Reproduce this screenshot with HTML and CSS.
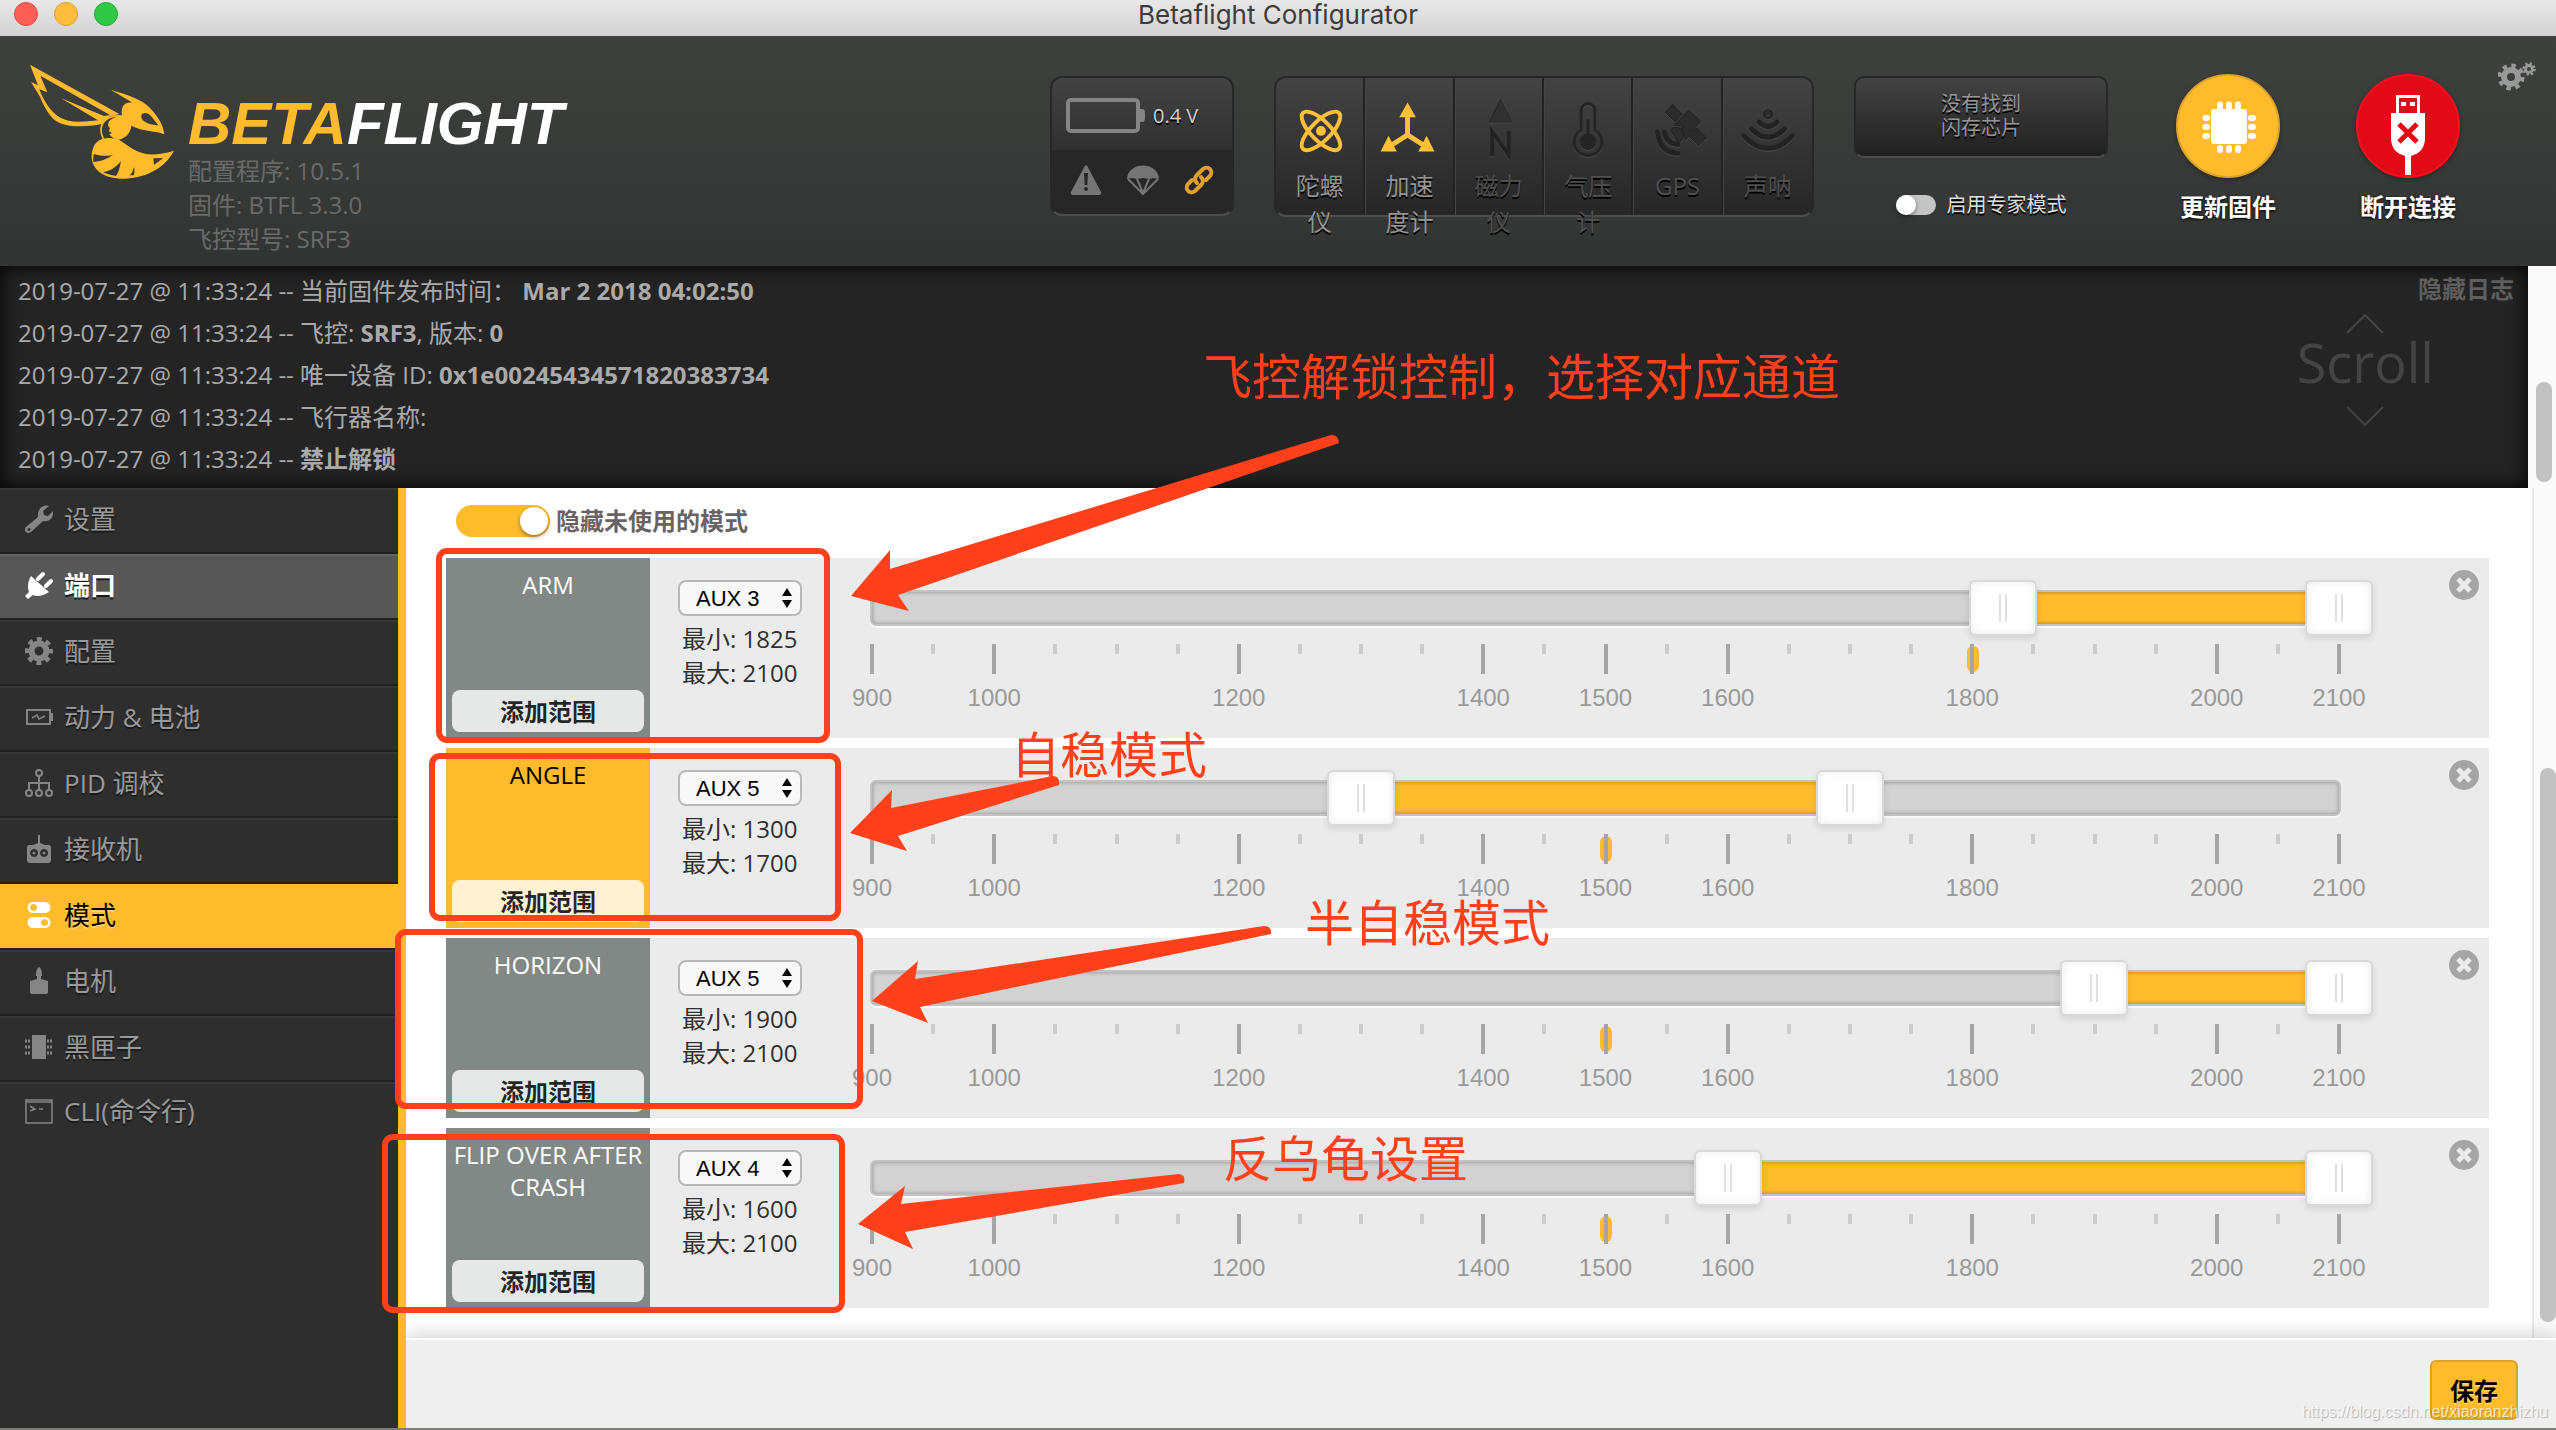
FILE: index.html
```html
<!DOCTYPE html>
<html lang="zh-CN">
<head>
<meta charset="utf-8">
<meta name="viewport" content="width=device-width, initial-scale=1">
<title>Betaflight Configurator</title>
<link rel="stylesheet" href="styles.css">
</head>
<body>
<div class="titlebar">
  <div class="lights"><span class="light light-close"></span><span class="light light-min"></span><span class="light light-max"></span></div>
  <div class="window-title">Betaflight Configurator</div>
</div>

<header class="header">
  <div class="brand">
    <svg class="bee" viewBox="0 0 510 405" aria-hidden="true">
      <path fill="#ffbb2b" fill-rule="evenodd" d="M30 29 298 177 270 184 245 207C200 216 140 219 108 198 85 180 70 150 60 125L33 81 54 91ZM61 62 82 112 58 103C68 130 85 162 112 182 140 203 180 203 234 196L122 129 252 183 270 180Z"/>
      <path fill="none" stroke="#ffbb2b" stroke-width="5" d="M304 183C262 180 228 205 250 252"/>
      <path fill="#ffbb2b" fill-rule="evenodd" d="M266 200C280 186 298 184 306 180 302 152 315 140 338 143L272 104C330 122 362 132 387 156 412 182 430 208 433 238 410 226 370 232 334 212 332 238 310 254 292 254 280 250 272 244 268 238L276 234 266 228 270 220 264 212ZM364 181C368 170 386 173 396 187L415 211C392 211 360 200 364 181Z"/>
      <path fill="#ffbb2b" fill-rule="evenodd" d="M246 252C268 246 288 250 297 254 345 285 370 315 462 287 430 345 370 372 300 371 240 368 213 335 215 300 217 275 228 258 246 252ZM221 297C240 303 260 305 279 299 262 312 240 320 219 320ZM249 352C275 346 290 335 303 317 300 335 297 350 288 363 275 361 262 358 249 352ZM329 361C338 355 338 345 342 336 345 348 343 356 341 361ZM400 310 430 309 402 330Z"/>
    </svg>
    <div class="brand-text">
      <div class="wordmark">BETA<span>FLIGHT</span></div>
      <div class="versions">
        <div>配置程序: 10.5.1</div>
        <div>固件: BTFL 3.3.0</div>
        <div>飞控型号: SRF3</div>
      </div>
    </div>
  </div>

  <div class="status-group">
    <div class="battery-panel">
      <div class="battery-top">
        <svg width="80" height="36" viewBox="0 0 80 36" aria-hidden="true"><rect x="2" y="2" width="70" height="31" rx="3" fill="none" stroke="#858585" stroke-width="4"/><path d="M74 11h2q3 0 3 4v5q0 4-3 4h-2z" fill="#858585"/></svg>
        <span>0.4 V</span>
      </div>
      <div class="battery-bottom">
        <svg width="32" height="30" viewBox="0 0 32 30" aria-hidden="true"><path fill="#757575" fill-rule="evenodd" d="M14.500 1.500Q16-1 17.500 1.500L31 27Q32 30 29 30H3Q0 30 1 27ZM14 8 14.700 20H17.300L18 8ZM16 22a2 2 0 1 0 0 4 2 2 0 0 0 0-4Z"/></svg>
        <svg width="32" height="30" viewBox="0 0 32 30" fill="none" stroke="#757575" stroke-width="2" aria-hidden="true"><path fill="#757575" stroke="none" d="M0 14C1-4 31-4 32 14L27 13 22 14 16 13 10 14 5 13Z"/><path d="M1 14 16 29 31 14M10 14 16 28 22 14"/></svg>
        <svg width="30" height="30" viewBox="0 0 30 30" fill="none" stroke="#e0a02c" stroke-width="4" stroke-linecap="round" aria-hidden="true"><path d="M13 18C10 15 11 12 13 10L19 4C24 0 30 6 26 11L22 15"/><path d="M17 12C20 15 19 18 17 20L11 26C6 30 0 24 4 19L8 15"/></svg>
      </div>
    </div>

    <div class="sensors">
      <div class="sensor sensor-on">
        <svg viewBox="0 0 90 75" aria-hidden="true"><g fill="none" stroke="#ffbf3a" stroke-width="4"><ellipse cx="46" cy="41" rx="26" ry="10" transform="rotate(45 46 41)"/><ellipse cx="46" cy="41" rx="26" ry="10" transform="rotate(-45 46 41)"/></g><circle cx="46" cy="41" r="5" fill="#ffbf3a"/></svg>
        <span>陀螺仪</span>
      </div>
      <div class="sensor sensor-on">
        <svg viewBox="0 0 90 75" aria-hidden="true"><path d="M42.500 20V45L24 57M42.500 45 61 57" fill="none" stroke="#ffbf3a" stroke-width="5"/><path fill="#ffbf3a" d="M42.500 12 51 27H34ZM23 46 31.500 62H15ZM62 46 70 62H53.500Z"/></svg>
        <span>加速度计</span>
      </div>
      <div class="sensor">
        <svg viewBox="0 0 90 75" aria-hidden="true"><path d="M45.500 9 57 32H34Z" fill="#313131" stroke="#262626"/><path d="M37 67V42L54 66V41" fill="none" stroke="#222" stroke-width="4"/></svg>
        <span>磁力仪</span>
      </div>
      <div class="sensor">
        <svg viewBox="0 0 90 75" fill="none" stroke="#242424" aria-hidden="true"><path stroke-width="3" d="M37 40V20a7 7 0 0 1 14 0V40A14 14 0 1 1 37 40Z"/><circle cx="44" cy="52" r="8" fill="#242424"/><path stroke-width="3" d="M44 29V50"/></svg>
        <span>气压计</span>
      </div>
      <div class="sensor">
        <svg viewBox="0 0 90 75" fill="#2b2b2b" stroke="#222" stroke-width="1" aria-hidden="true"><path d="M39.500 14 49 24 42 32 32 22ZM56 20 68 31 53 50 48 36 41 35ZM64 38 74 48 66 56 57 47Z"/><path d="M37 40a8 8 0 1 1 8 13Z"/><path fill="none" stroke-width="5" stroke-linecap="round" d="M31 42Q33 54 45 55M24 42Q26 63 45 64"/></svg>
        <span>GPS</span>
      </div>
      <div class="sensor">
        <svg viewBox="0 0 90 75" fill="none" stroke="#222" stroke-width="5" stroke-linecap="round" aria-hidden="true"><circle cx="45" cy="24" r="4" fill="#333" stroke-width="2"/><path d="M36 32Q45 41 54 32M28 39Q45 56 62 39M20 46Q45 72 70 46"/></svg>
        <span>声呐</span>
      </div>
    </div>

    <div class="expert">
      <div class="dataflash">没有找到<br>闪存芯片</div>
      <label class="expert-toggle"><input type="checkbox" class="switch switch-small"><span>启用专家模式</span></label>
    </div>

    <div class="actions">
      <button class="action" type="button">
        <span class="disc disc-flash"><svg viewBox="0 0 100 100" aria-hidden="true"><rect x="33" y="33" width="36" height="35" rx="3" fill="#fff"/><path stroke="#fff" stroke-width="6" stroke-linecap="round" d="M42 28.500V31M51 28.500V31M60 28.500V31M42 72V74M51 72V74M60 72V74M27.500 42H29M27.500 51H29M27.500 60H29M73 42H75M73 51H75M73 60H75"/></svg></span>
        <span>更新固件</span>
      </button>
      <button class="action" type="button">
        <span class="disc disc-off"><svg viewBox="0 0 100 100" aria-hidden="true"><path fill="#fff" fill-rule="evenodd" d="M38 19H62V37H67V62Q67 76 53 80V99H47V80Q33 76 33 62V37H38ZM41 22V37H59V22ZM43 26H48V30H43ZM52 26H57V30H52Z"/><path stroke="#e30a17" stroke-width="5" d="M41 48 59 66M59 48 41 66"/></svg></span>
        <span>断开连接</span>
      </button>
    </div>
    <button class="options" type="button" aria-label="选项">
      <svg viewBox="0 0 38 30" fill="none" stroke="#999" aria-hidden="true"><circle cx="13" cy="16" r="7" stroke-width="6"/><circle cx="13" cy="16" r="11.500" stroke-width="4" stroke-dasharray="4.500 4.530"/><circle cx="31" cy="8" r="3.500" stroke-width="3"/><circle cx="31" cy="8" r="5.500" stroke-width="2.500" stroke-dasharray="2.200 2.120"/></svg>
    </button>
  </div>
</header>

<section class="log">
  <div class="log-body">
    <div class="log-lines">
      <p>2019-07-27 @ 11:33:24 -- 当前固件发布时间： <b>Mar 2 2018 04:02:50</b></p>
      <p>2019-07-27 @ 11:33:24 -- 飞控: <b>SRF3</b>, 版本: <b>0</b></p>
      <p>2019-07-27 @ 11:33:24 -- 唯一设备 ID: <b>0x1e00245434571820383734</b></p>
      <p>2019-07-27 @ 11:33:24 -- 飞行器名称:</p>
      <p>2019-07-27 @ 11:33:24 -- <b>禁止解锁</b></p>
    </div>
    <div class="log-side">
      <a class="log-hide" href="#">隐藏日志</a>
      <div class="log-scroll">
        <svg width="38" height="20" viewBox="0 0 38 20" fill="none" stroke="#444" stroke-width="2" aria-hidden="true"><path d="M1 19 19 1 37 19"/></svg>
        <span>Scroll</span>
        <svg width="38" height="20" viewBox="0 0 38 20" fill="none" stroke="#444" stroke-width="2" aria-hidden="true"><path d="M1 1 19 19 37 1"/></svg>
      </div>
    </div>
  </div>
  <div class="log-bar"><div class="log-thumb"></div></div>
</section>

<div class="main">
  <nav class="tabs">
    <a href="#"><svg viewBox="0 0 28 28"><path fill="currentColor" fill-rule="evenodd" d="M24 1 18 6 19 10 23 11 28 6C29 13 24 17 18 16L6 27C2 30-2 25 1 22L13 12C12 5 17-1 24 1ZM4 23a1.500 1.500 0 1 0 .1 0Z"/></svg>设置</a>
    <a href="#" class="hover"><svg viewBox="0 0 28 28"><path fill="currentColor" d="M6 5 24 21C18 25 12 26 8 24L3 28 0 25 4 21C2 16 3 10 6 5Z"/><path stroke="currentColor" stroke-width="4" stroke-linecap="round" d="M13 8 18 3M21 15 26 10"/></svg>端口</a>
    <a href="#"><svg viewBox="0 0 28 28" fill="none" stroke="currentColor"><circle cx="14" cy="14" r="7.500" stroke-width="6"/><circle cx="14" cy="14" r="12" stroke-width="4" stroke-dasharray="5 4.420" stroke-dashoffset="2.500"/></svg>配置</a>
    <a href="#"><svg viewBox="0 0 28 28" fill="none" stroke="currentColor" stroke-width="2"><path d="M2 7H25V21H2ZM27 10V18"/><path stroke-width="1.500" d="M7 15 12 12 14 16 20 13"/></svg>动力 &amp; 电池</a>
    <a href="#"><svg viewBox="0 0 28 28" fill="none" stroke="currentColor" stroke-width="2"><circle cx="14" cy="4" r="3"/><circle cx="4" cy="24" r="3"/><circle cx="14" cy="24" r="3"/><circle cx="24" cy="24" r="3"/><path d="M14 7V21M4 21V14H24V21"/></svg>PID 调校</a>
    <a href="#"><svg viewBox="0 0 28 28"><path fill="currentColor" fill-rule="evenodd" d="M13 0H15V8L20 10H24Q26 10 26 13V25Q26 28 23 28H5Q2 28 2 25V13Q2 10 4 10H8L13 8ZM9 14a4 4 0 1 0 .1 0ZM19 14a4 4 0 1 0 .1 0Z"/><circle cx="9" cy="18" r="1.500" fill="currentColor"/><circle cx="19" cy="18" r="1.500" fill="currentColor"/></svg>接收机</a>
    <a href="#" class="active"><svg viewBox="0 0 28 28"><path fill="#fff" fill-rule="evenodd" d="M8 1H20A5.500 5.500 0 0 1 20 12H8A5.500 5.500 0 0 1 8 1ZM8.500 3a3.500 3.500 0 1 0 .1 0ZM8 16H20A5.500 5.500 0 0 1 20 27H8A5.500 5.500 0 0 1 8 16ZM19.500 18a3.500 3.500 0 1 0 .1 0Z"/></svg>模式</a>
    <a href="#"><svg viewBox="0 0 28 28"><path fill="currentColor" d="M14 0C17 2 17 6 17 9H16V12L23 14V25Q23 27 20 27H8Q5 27 5 25V14L12 12V9H11C11 6 11 2 14 0Z"/></svg>电机</a>
    <a href="#"><svg viewBox="0 0 28 28" stroke="currentColor" stroke-width="2"><rect x="8" y="3" width="12" height="22" fill="currentColor"/><path stroke-width="3" stroke-dasharray="2 1" d="M0 8H6M0 14H6M0 20H6M22 8H28M22 14H28M22 20H28"/></svg>黑匣子</a>
    <a href="#"><svg viewBox="0 0 28 28" fill="none" stroke="currentColor" stroke-width="1.500"><path d="M1 3H27V26H1ZM1 5H27"/><path d="M5 9 10 12 5 14M14 12H18"/></svg>CLI(命令行)</a>
  </nav>

  <main class="content">
    <div class="content-body">
      <div class="panel">
        <label class="hide-unused"><input type="checkbox" class="switch" checked><span>隐藏未使用的模式</span></label>
        <div class="modes" id="modes"></div>
      </div>
      <div class="content-bar"><div class="content-thumb"></div></div>
    </div>
    <footer class="toolbar"><button type="button" class="save">保存</button><span class="watermark">https://blog.csdn.net/xiaoranzhizhu</span></footer>
  </main>
</div>

<div class="notes">
  <svg width="2556" height="1430" viewBox="0 0 2556 1430">
    <g fill="none" stroke="#ff401b" stroke-width="6">
      <rect x="439" y="551" width="388" height="189" rx="8"/>
      <rect x="432" y="756" width="406" height="162" rx="8"/>
      <rect x="398" y="932" width="462" height="174" rx="8"/>
      <rect x="385" y="1137" width="457" height="173" rx="8"/>
    </g>
    <g fill="#ff401b">
      <path d="M851 596 890 550V569L1331 435Q1338 434 1339 443L898 595 909 611Z"/>
      <path d="M850 833 892 790 891 808 1053 776Q1060 776 1059 785L898 836 907 851Z"/>
      <path d="M872 1001 918 961 915 979 1264 926Q1272 926 1271 934L920 1007 928 1023Z"/>
      <path d="M858 1224 905 1186 901 1204 1179 1174Q1186 1175 1184 1183L905 1232 913 1249Z"/>
    </g>
    <g class="note-text">
      <text x="1203" y="395">飞控解锁控制，选择对应通道</text>
      <text x="1011" y="773">自稳模式</text>
      <text x="1305" y="941">半自稳模式</text>
      <text x="1223" y="1177">反乌龟设置</text>
    </g>
  </svg>
</div>
<script src="modes.js"></script>
</body>
</html>
```

FILE: styles.css
```css
* { box-sizing: border-box; }

:root {
  --amber: #ffbb2b;
  --ui: "Open Sans", "Noto Sans CJK SC", sans-serif;
}

body {
  margin: 0;
  min-height: 100vh;
  display: flex;
  flex-direction: column;
  position: relative;
  font-family: var(--ui);
  font-size: 24px;
  line-height: 34px;
  color: #303030;
  background: #2e2e2e;
  border-bottom: 2px solid #7c8078;
}

button { font-family: inherit; padding: 0; cursor: pointer; }
svg { display: block; flex: none; }

/* window title */
.titlebar {
  height: 36px;
  display: grid;
  grid-template-columns: 1fr auto 1fr;
  background: linear-gradient(#e8e8e8, #d2d2d2);
}
.lights { display: flex; gap: 16px; padding: 2px 0 0 14px; }
.light { width: 24px; height: 24px; border-radius: 50%; border: 1px solid #e2463f; background: #ff5f57; }
.light-min { background: #ffbd3e; border-color: #e09e2e; }
.light-max { background: #30c947; border-color: #1fab32; }
.window-title { font-family: Inter, sans-serif; font-size: 26px; line-height: 30px; color: #3c3c3c; }

/* header */
.header {
  min-height: 230px;
  display: flex;
  justify-content: space-between;
  background: linear-gradient(#3f413f, #323433);
}
.brand { display: flex; padding: 19px 0 0 20px; }
.bee { width: 170px; height: 135px; margin-right: -2px; }
.brand-text { padding-top: 28px; }
.wordmark {
  font-family: "Liberation Sans", sans-serif;
  font-size: 60px;
  font-weight: bold;
  font-style: italic;
  line-height: 82px;
  color: var(--amber);
  height: 71px;
}
.wordmark span { color: #fff; }
.versions { color: #6a6a6a; }

.status-group { display: flex; padding-top: 40px; padding-right: 20px; }
.battery-panel {
  width: 184px;
  height: 140px;
  margin-right: 40px;
  border: 2px solid #272727;
  border-bottom-color: #4d4d4d;
  border-radius: 12px;
  overflow: hidden;
  background: #272727;
}
.battery-top {
  height: 72px;
  display: flex;
  align-items: center;
  gap: 7px;
  padding: 4px 0 0 14px;
  font-size: 20px;
  color: #d0d0d0;
  text-shadow: 0 2px #000;
  background: linear-gradient(#434343, #303030);
}
.battery-bottom { display: flex; gap: 25px; padding: 15px 0 0 18px; }

.sensors {
  display: grid;
  grid-template-columns: repeat(6, minmax(0, 1fr));
  width: 540px;
  height: 141px;
  margin-right: 40px;
  border: 2px solid #272727;
  border-bottom-color: #4d4d4d;
  border-radius: 12px;
  background: linear-gradient(#434343, #262626);
}
.sensor {
  height: 137px;
  padding-top: 12px;
  border-right: 2px solid #222;
  border-left: 1px solid #444;
  text-align: center;
  line-height: 36px;
  color: #4f4f4f;
  text-shadow: 0 2px #000;
}
.sensor:first-child { border-left: 0; }
.sensor:last-child { border-right: 0; }
.sensor svg { width: 88px; height: 75px; filter: drop-shadow(0 1px #4a4a4a); }
.sensor span { display: block; margin: 3px 12px 0; }
.sensor-on { color: #949494; }
.sensor-on svg { filter: none; }

.expert { width: 254px; margin-right: 68px; text-align: center; }
.dataflash {
  height: 82px;
  padding-top: 14px;
  border: 2px solid #272727;
  border-bottom-color: #4d4d4d;
  border-radius: 10px;
  background: linear-gradient(#434343, #202020);
  font-size: 20px;
  line-height: 24px;
  color: #949494;
  text-shadow: 0 2px #000;
}
.expert-toggle {
  display: flex;
  align-items: center;
  justify-content: center;
  gap: 11px;
  margin-top: 30px;
  font-size: 20px;
  color: #ddd;
  text-shadow: 0 2px #000;
}

.switch {
  appearance: none;
  width: 94px;
  height: 32px;
  margin: 0;
  padding: 2px;
  border-radius: 16px;
  background: #c4c4c4;
  display: flex;
}
.switch::before {
  content: "";
  width: 28px;
  height: 28px;
  border-radius: 50%;
  background: #fff;
  box-shadow: 0 2px 4px rgba(0, 0, 0, .4);
}
.switch:checked { background: var(--amber); justify-content: flex-end; }
.switch-small { width: 40px; height: 20px; padding: 0; }
.switch-small::before { width: 20px; height: 20px; }

.actions { display: flex; gap: 76px; margin-top: -2px; }
.action {
  width: 104px;
  height: 160px;
  border: 0;
  background: none;
  display: flex;
  flex-direction: column;
  align-items: center;
  gap: 12px;
  font-size: 24px;
  font-weight: 600;
  line-height: 34px;
  color: #fff;
  text-shadow: 0 1px 3px #000;
}
.disc { width: 104px; height: 104px; border-radius: 50%; border: 2px solid #dba32a; background: var(--amber); box-shadow: 0 2px 5px rgba(0, 0, 0, .3); }
.disc-off { background: #e30a17; border-color: #fa0f1d; }
.options { width: 38px; height: 30px; margin: -15px 0 0 38px; border: 0; background: none; }

/* log */
.log { display: flex; min-height: 222px; }
.log-body {
  flex: 1;
  display: flex;
  justify-content: space-between;
  padding: 4px 14px 8px 18px;
  background: #242424;
  box-shadow: inset 0 0 20px #000;
  color: #aaa;
}
.log p { margin: 0; line-height: 42px; white-space: pre; }
.log-side { display: flex; flex-direction: column; align-items: flex-end; }
.log-hide { margin-top: 2px; font-weight: bold; color: #5e5e5e; text-decoration: none; }
.log-scroll { display: flex; flex-direction: column; align-items: center; margin: 8px 80px 0 0; color: #444; }
.log-scroll span { font-size: 54px; line-height: 56px; padding-bottom: 16px; }
.log-bar { width: 28px; padding: 116px 4px 6px 8px; background: #fafafa; display: flex; }
.log-thumb { flex: 1; border-radius: 8px; background: #c2c2c2; }

/* tabs */
.main { flex: 1; display: grid; grid-template-columns: 398px 1fr; }
.tabs { background: #2e2e2e; }
.tabs a {
  height: 66px;
  display: flex;
  align-items: center;
  gap: 11px;
  padding: 0 0 4px 25px;
  font-size: 26px;
  color: #999;
  text-decoration: none;
  text-shadow: 0 2px #1a1a1a;
  border-top: 2px solid #373737;
  border-bottom: 2px solid #202020;
}
.tabs svg { width: 28px; height: 28px; color: #858585; }
.tabs a:last-child { border-bottom: 0; height: 60px; }
.tabs a.hover { background: #575757; border-top-color: #636363; color: #fff; font-weight: bold; }
.tabs a.hover svg { color: #fff; }
.tabs a.active { background: var(--amber); border-top-color: var(--amber); color: #000; text-shadow: 0 2px #ffd06b; }

/* modes */
.content { display: flex; flex-direction: column; border-left: 8px solid var(--amber); background: #fff; min-width: 0; }
.content-body { flex: 1; display: flex; }
.panel { flex: 1; padding: 16px 43px 30px 40px; }
.hide-unused { display: flex; align-items: center; gap: 6px; margin: 0 0 20px 10px; font-weight: bold; color: #6a6363; }
.modes { display: flex; flex-direction: column; gap: 10px; }
.mode { display: flex; height: 180px; background: #ebebeb; }
.mode-name {
  width: 204px;
  display: flex;
  flex-direction: column;
  justify-content: space-between;
  padding: 11px 6px 6px;
  background: #828885;
  color: #fff;
  font-weight: 500;
  line-height: 32px;
  text-align: center;
}
.mode-name span { margin: 0 -6px; }
.mode-on .mode-name { background: var(--amber); color: #000; }
.add {
  height: 42px;
  padding-bottom: 2px;
  border: 0;
  border-radius: 8px;
  background: rgba(255, 255, 255, .8);
  font-size: 24px;
  font-weight: bold;
  color: rgba(0, 0, 0, .85);
}
.mode-info { width: 220px; padding: 22px 0 0 28px; }
.mode-info select {
  appearance: none;
  display: block;
  width: 124px;
  height: 36px;
  margin-bottom: 6px;
  padding: 0 0 0 16px;
  border: 2px solid #b8b8b8;
  border-radius: 8px;
  background: #f8f8f8 url("data:image/svg+xml,%3Csvg xmlns='http://www.w3.org/2000/svg' width='10' height='20'%3E%3Cpath d='M0 8 5 0 10 8ZM0 12 5 20 10 12Z'/%3E%3C/svg%3E") no-repeat right 8px center;
  font: 22px "Liberation Sans", sans-serif;
  color: #000;
}
.mode-info div { padding-left: 4px; }
.mode-range { flex: 1; padding-top: 32px; }
.track {
  position: relative;
  height: 36px;
  border: 2px solid #c3c3c3;
  border-radius: 6px;
  background: #d2d2d2;
  box-shadow: 0 2px #fafafa, inset 0 0 4px rgba(0, 0, 0, .35);
}
.fill { position: absolute; top: 0; bottom: 0; background: var(--amber); box-shadow: inset 0 0 4px rgba(0, 0, 0, .35); }
.track input {
  appearance: none;
  position: absolute;
  left: -34px;
  width: calc(100% + 68px);
  top: -12px;
  height: 56px;
  margin: 0;
  background: none;
  pointer-events: none;
}
.track input::-webkit-slider-thumb {
  appearance: none;
  pointer-events: auto;
  width: 68px;
  height: 56px;
  border: 2px solid #d9d9d9;
  border-radius: 6px;
  background:
    linear-gradient(90deg, #e0e0e0 2px, transparent 2px 6px, #e0e0e0 6px) no-repeat center / 8px 28px,
    #fff;
  box-shadow: inset 0 0 10px #ebebeb, 0 3px 6px rgba(0, 0, 0, .1);
}
.scale { position: relative; display: flex; justify-content: space-between; padding: 18px 2px 0; }
.marker { position: absolute; top: 20px; width: 12px; height: 26px; margin-left: -6px; border-radius: 6px; background: var(--amber); }
.tick { position: relative; width: 0; display: flex; flex-direction: column; align-items: center; gap: 7px; font-family: "Liberation Sans", sans-serif; color: #999; }
.tick i { width: 4px; height: 10px; background: #ccc; }
.tick-major i { height: 30px; background: #a5a5a5; }
.delete { width: 30px; height: 30px; margin: 12px 10px 0 108px; border: 0; background: none; }

.content-bar { width: 24px; margin-left: auto; padding: 280px 0 16px 6px; display: flex; background: #fafafa; border-left: 2px solid #e8e8e8; }
.content-thumb { flex: 1; border-radius: 8px; background: #c2c2c2; }

.toolbar {
  position: relative;
  height: 90px;
  padding: 20px 38px 0 0;
  display: flex;
  justify-content: flex-end;
  background: #efefef;
  border-top: 2px solid #fff;
  box-shadow: 0 -4px 16px rgba(0, 0, 0, .16);
  clip-path: inset(-30px 0 0 0);
}
.save {
  width: 88px;
  height: 60px;
  padding-bottom: 2px;
  border: 2px solid #dba32a;
  border-radius: 6px;
  background: var(--amber);
  font-size: 24px;
  font-weight: bold;
  color: #000;
  text-shadow: 0 2px #ffd06b;
}
.watermark {
  position: absolute;
  right: 8px;
  bottom: 4px;
  font-family: "Liberation Sans", sans-serif;
  font-size: 16px;
  line-height: 24px;
  color: rgba(255, 255, 255, .7);
  text-shadow: 1px 1px 1px rgba(0, 0, 0, .25);
}

/* annotations over the window */
.notes { position: absolute; inset: 0; overflow: hidden; pointer-events: none; }
.note-text { font-family: "Noto Sans CJK SC", sans-serif; font-size: 49px; fill: #ff401b; }
```

FILE: modes.js
```js
const modes = [
  { name: "ARM", aux: 3, min: 1825, max: 2100, at: 1800 },
  { name: "ANGLE", aux: 5, min: 1300, max: 1700, at: 1500, on: true },
  { name: "HORIZON", aux: 5, min: 1900, max: 2100, at: 1500 },
  { name: "FLIP OVER AFTER CRASH", aux: 4, min: 1600, max: 2100, at: 1500 },
];
const labelled = [900, 1000, 1200, 1400, 1500, 1600, 1800, 2000, 2100];
const pct = (v) => ((v - 900) / 12).toFixed(2);

let ticks = "";
for (let v = 900; v <= 2100; v += 50) {
  ticks += labelled.includes(v)
    ? `<div class="tick tick-major"><i></i>${v}</div>`
    : `<div class="tick"><i></i></div>`;
}

const channels = (aux) =>
  Array.from({ length: 8 }, (_, i) => i + 1)
    .map((n) => `<option${n === aux ? " selected" : ""}>AUX ${n}</option>`)
    .join("");

document.getElementById("modes").innerHTML = modes
  .map(
    (m) => `<div class="mode${m.on ? " mode-on" : ""}">
  <div class="mode-name"><span>${m.name}</span><button type="button" class="add">添加范围</button></div>
  <div class="mode-info">
    <select aria-label="${m.name} 通道">${channels(m.aux)}</select>
    <div>最小: ${m.min}</div>
    <div>最大: ${m.max}</div>
  </div>
  <div class="mode-range">
    <div class="track">
      <div class="fill" style="left:${pct(m.min)}%;right:${(100 - pct(m.max)).toFixed(2)}%"></div>
      <input type="range" min="900" max="2100" value="${m.min}" aria-label="${m.name} 最小">
      <input type="range" min="900" max="2100" value="${m.max}" aria-label="${m.name} 最大">
    </div>
    <div class="scale"><div class="marker" style="left:${pct(m.at)}%"></div>${ticks}</div>
  </div>
  <button type="button" class="delete" aria-label="删除"><svg width="30" height="30" viewBox="0 0 30 30"><circle cx="15" cy="15" r="15" fill="#a5a5a5"/><path d="M9 9 21 21M21 9 9 21" stroke="#ebebeb" stroke-width="5"/></svg></button>
</div>`
  )
  .join("");
```
